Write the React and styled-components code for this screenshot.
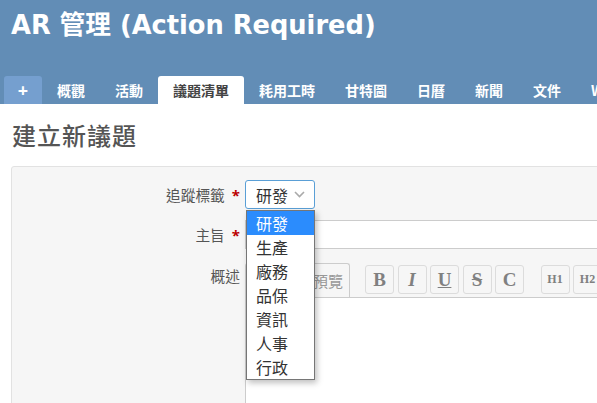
import React from 'react';
import styled, { createGlobalStyle } from 'styled-components';

const GlobalStyle = createGlobalStyle`
  html, body {
    margin: 0;
    padding: 0;
    background: #fff;
    overflow: hidden;
  }
  body {
    font-family: "Open Sans", "Noto Sans CJK TC", sans-serif;
  }
`;

const Page = styled.div`
  width: 597px;
  height: 403px;
  overflow: hidden;
`;

const Header = styled.header`
  background: #628db6;
  height: 104px;
  box-sizing: border-box;
  padding: 7px 0 0 4px;
  display: flex;
  flex-direction: column;
  justify-content: space-between;
`;

const Title = styled.h1`
  margin: 0 0 0 7px;
  color: #fff;
  font-family: "DejaVu Sans", "Noto Sans CJK TC", sans-serif;
  font-size: 25.7px;
  font-weight: 700;
  line-height: 36px;
  white-space: nowrap;
`;

const TabBar = styled.nav`
  display: flex;
  align-items: flex-end;
  height: 28px;
  white-space: nowrap;
`;

const Tab = styled.a`
  flex-shrink: 0;
  display: flex;
  align-items: center;
  height: 28px;
  box-sizing: border-box;
  padding: 0 15px;
  font-family: "Noto Sans CJK TC", sans-serif;
  font-size: 14px;
  font-weight: 700;
  color: ${p => (p.$selected ? '#444' : '#fff')};
  background: ${p => (p.$selected ? '#fff' : 'transparent')};
  border-radius: 3px 3px 0 0;
`;

const PlusTab = styled(Tab)`
  width: 38px;
  padding: 0;
  justify-content: center;
  background: #759fcf;
  font-family: "Open Sans", sans-serif;
  font-size: 18px;
`;

const Content = styled.main`
  padding: 16px 0 0 11px;
`;

const Heading = styled.h2`
  margin: 0 0 16px 1px;
  font-family: "Noto Sans CJK TC", sans-serif;
  font-size: 24px;
  font-weight: 500;
  letter-spacing: 1px;
  line-height: 30px;
  color: #555;
`;

const FormBox = styled.div`
  background: #f6f6f6;
  border: 1px solid #e2e2e2;
  border-radius: 3px 0 0 0;
  margin-right: -40px;
  height: 300px;
  padding-top: 13px;
  display: flex;
  flex-direction: column;
`;

const Row = styled.div`
  display: flex;
  align-items: ${p => (p.$top ? 'flex-start' : 'center')};
  margin-bottom: ${p => p.$gap || 0}px;
`;

const Label = styled.label`
  flex: 0 0 228px;
  box-sizing: border-box;
  text-align: right;
  margin-right: 5px;
  padding-top: ${p => (p.$top ? '3px' : '0')};
  font-family: "Noto Sans CJK TC", sans-serif;
  font-size: 14.7px;
  color: #555;
  line-height: 20px;
  white-space: nowrap;
`;

const Required = styled.span`
  color: #bb0000;
  font-family: "Open Sans", sans-serif;
  font-weight: 700;
  margin-left: 7px;
  font-size: 15px;
`;

const SelectWrap = styled.div`
  position: relative;
`;

const Select = styled.div`
  width: 70px;
  height: 29px;
  box-sizing: border-box;
  border: 1px solid #5a9fd6;
  border-radius: 3px;
  background: #fff;
  display: flex;
  align-items: center;
  justify-content: space-between;
  padding: 0 9px 0 10px;
  font-family: "Noto Sans CJK TC", sans-serif;
  font-size: 16px;
  color: #333;
`;

const Dropdown = styled.ul`
  position: absolute;
  top: 30px;
  left: 1px;
  width: 69px;
  margin: 0;
  padding: 0;
  list-style: none;
  box-sizing: border-box;
  background: #fff;
  border: 1px solid #767676;
  box-shadow: 2px 3px 6px rgba(0, 0, 0, 0.25);
  z-index: 10;
`;

const Option = styled.li`
  height: 24px;
  line-height: 24px;
  padding-left: 9px;
  font-family: "Noto Sans CJK TC", sans-serif;
  font-size: 16px;
  color: ${p => (p.$active ? '#fff' : '#333')};
  background: ${p => (p.$active ? '#2b8cfd' : 'transparent')};
`;

const TextInput = styled.div`
  flex: 1;
  height: 29px;
  box-sizing: border-box;
  background: #fff;
  border: 1px solid #ccc;
  border-right: none;
`;

const Editor = styled.div`
  flex: 1;
  display: flex;
  flex-direction: column;
  height: 260px;
`;

const EditorBar = styled.div`
  display: flex;
  align-items: flex-start;
  height: 34px;
  border-bottom: 1px solid #ccc;
`;

const EditorTab = styled.span`
  height: 34px;
  box-sizing: border-box;
  margin-right: 5px;
  padding: 0 6px 0 12px;
  border: 1px solid #ccc;
  border-bottom: none;
  border-radius: 3px 3px 0 0;
  display: flex;
  align-items: center;
  font-family: "Noto Sans CJK TC", sans-serif;
  font-size: 15px;
  color: ${p => (p.$selected ? '#555' : '#999')};
  background: ${p => (p.$selected ? '#fff' : '#f6f6f6')};
`;

const Toolbar = styled.div`
  display: flex;
  gap: 3.5px;
  margin: 2px 0 0 10px;
`;

const ToolButton = styled.span`
  width: 29px;
  height: 29px;
  box-sizing: border-box;
  margin-left: ${p => p.$sep || 0}px;
  border: 1px solid #dcdcdc;
  border-radius: 3px;
  background: #f6f6f6;
  display: flex;
  align-items: center;
  justify-content: center;
  font-family: "Liberation Serif", serif;
  font-weight: 700;
  font-size: ${p => (p.$small ? '12px' : '19px')};
  font-style: ${p => (p.$italic ? 'italic' : 'normal')};
  text-decoration: ${p => p.$deco || 'none'};
  color: #808080;
`;

const TextArea = styled.div`
  flex: 1;
  background: #fff;
  border-left: 1px solid #ccc;
`;

const tabs = ['概觀', '活動', '議題清單', '耗用工時', '甘特圖', '日曆', '新聞', '文件', 'Wiki'];
const trackers = ['研發', '生產', '廠務', '品保', '資訊', '人事', '行政'];

const Chevron = () => (
  <svg width="11" height="7" viewBox="0 0 11 7">
    <polyline points="1,1 5.5,5.5 10,1" fill="none" stroke="#aaa" strokeWidth="1.6" />
  </svg>
);

export default function App() {
  return (
    <Page>
      <GlobalStyle />
      <Header>
        <Title>AR 管理 (Action Required)</Title>
        <TabBar>
          <PlusTab>+</PlusTab>
          {tabs.map(t => (
            <Tab key={t} $selected={t === '議題清單'}>{t}</Tab>
          ))}
        </TabBar>
      </Header>
      <Content>
        <Heading>建立新議題</Heading>
        <FormBox>
          <Row $gap={11}>
            <Label>追蹤標籤<Required>*</Required></Label>
            <SelectWrap>
              <Select>
                <span>研發</span>
                <Chevron />
              </Select>
              <Dropdown>
                {trackers.map((t, i) => (
                  <Option key={t} $active={i === 0}>{t}</Option>
                ))}
              </Dropdown>
            </SelectWrap>
          </Row>
          <Row $gap={14}>
            <Label>主旨<Required>*</Required></Label>
            <TextInput />
          </Row>
          <Row $top>
            <Label $top>概述</Label>
            <Editor>
              <EditorBar>
                <EditorTab $selected>編輯</EditorTab>
                <EditorTab>預覽</EditorTab>
                <Toolbar>
                  <ToolButton>B</ToolButton>
                  <ToolButton $italic>I</ToolButton>
                  <ToolButton $deco="underline">U</ToolButton>
                  <ToolButton $deco="line-through">S</ToolButton>
                  <ToolButton>C</ToolButton>
                  <ToolButton $small $sep={13}>H1</ToolButton>
                  <ToolButton $small>H2</ToolButton>
                  <ToolButton $small>H3</ToolButton>
                </Toolbar>
              </EditorBar>
              <TextArea />
            </Editor>
          </Row>
        </FormBox>
      </Content>
    </Page>
  );
}
